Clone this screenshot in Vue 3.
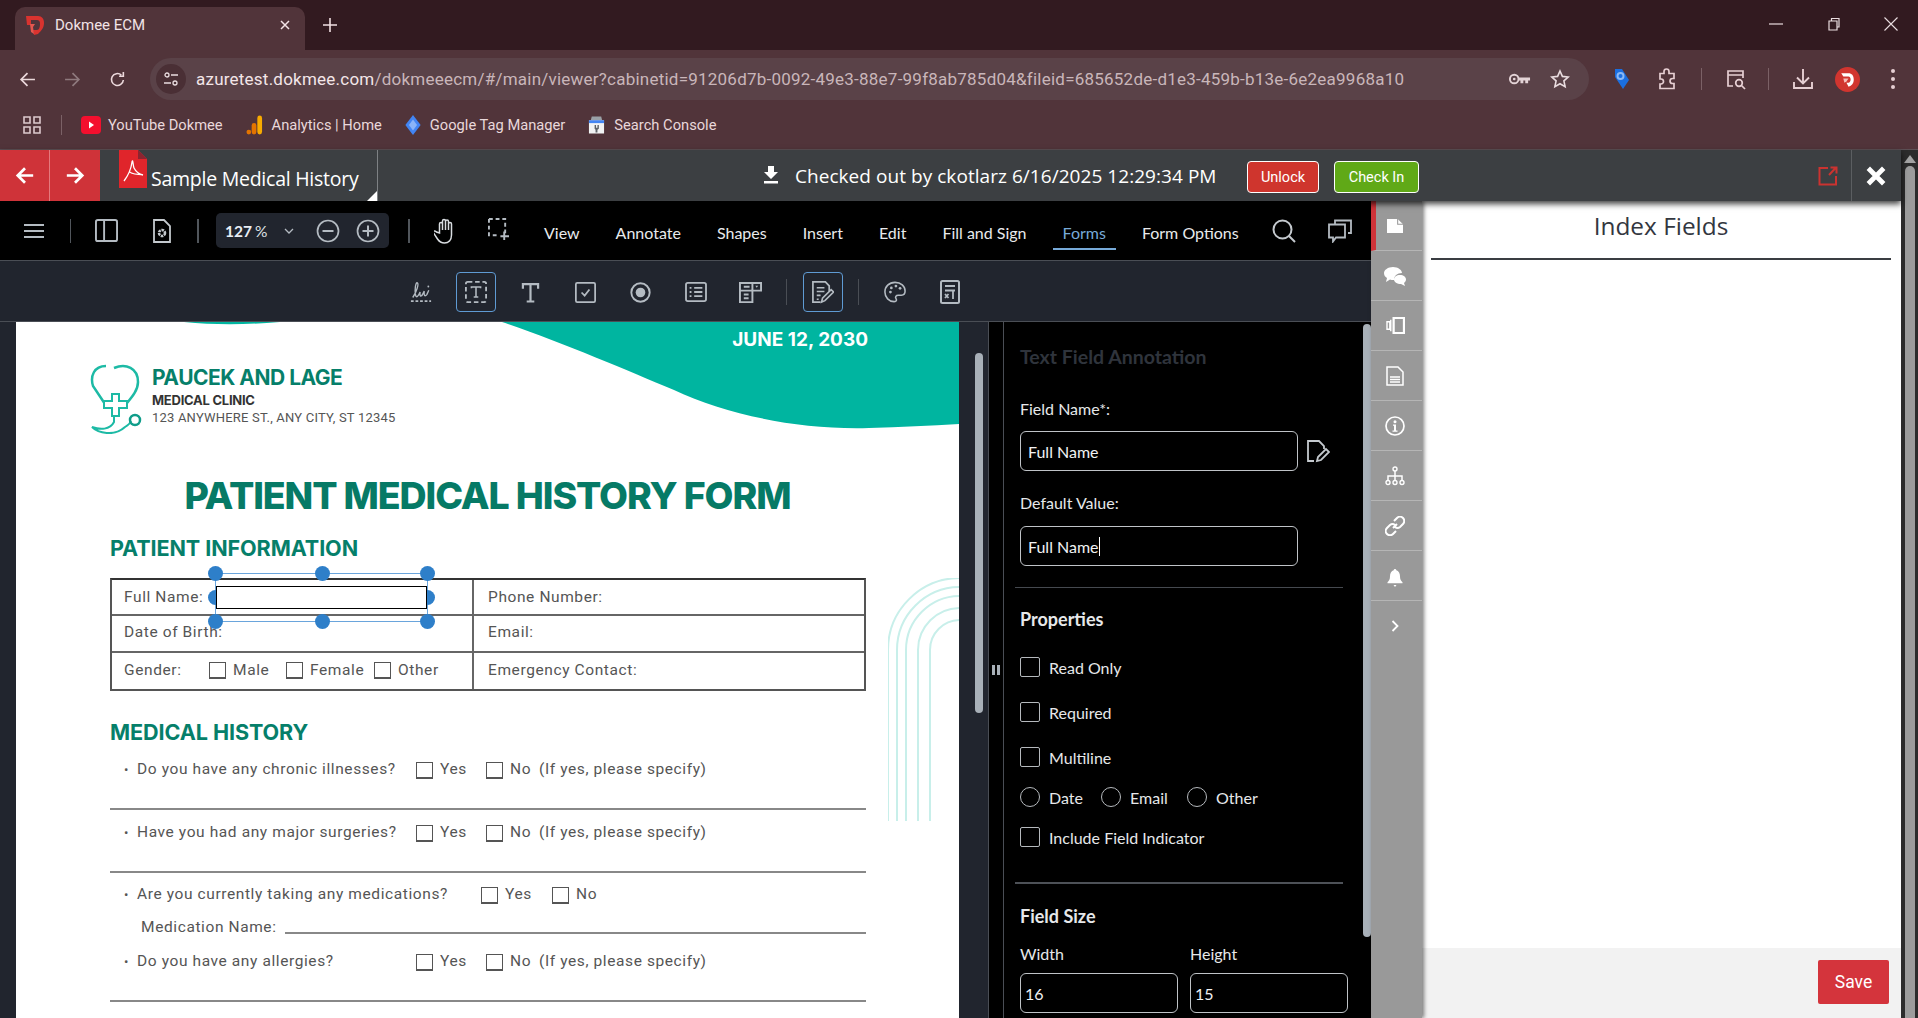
<template>
  <div class="screen">
    <!-- browser tab strip -->
    <div class="tabstrip">
      <div class="tab">
        <svg class="favicon" viewBox="0 0 20 20"><path d="M1 1h12c4 0 6 3 6 7 0 5-3 8-6 11l-4 1-1-5h4c2 0 3-3 3-6s-1-4-3-4H6v5H2z" fill="#d9332f"/><path d="M5 9h5l-2 3 1 7-3-2z" fill="#e4574f"/></svg>
        <span class="tab-title">Dokmee ECM</span>
        <svg class="tab-x" viewBox="0 0 12 12"><path d="M2 2l8 8M10 2l-8 8" stroke="#f3e3e6" stroke-width="1.5"/></svg>
      </div>
      <svg class="tab-plus" viewBox="0 0 14 14"><path d="M7 0v14M0 7h14" stroke="#f0dfe2" stroke-width="1.6"/></svg>
      <div class="winctl">
        <svg viewBox="0 0 14 14" class="w-min"><path d="M0 7h14" stroke="#eadde0" stroke-width="1.2"/></svg>
        <svg viewBox="0 0 14 14" class="w-max"><path d="M2 4h8v9H2zM4.500 4V1.500h7.500V10h-2" fill="none" stroke="#eadde0" stroke-width="1.2"/></svg>
        <svg viewBox="0 0 14 14" class="w-close"><path d="M.5.500l13 13M13.500.500l-13 13" stroke="#eadde0" stroke-width="1.1"/></svg>
      </div>
    </div>

    <!-- browser toolbar -->
    <div class="toolbar">
      <button class="nav-btn">
        <svg viewBox="0 0 16 16" width="17" height="17"><path d="M15 8H2M8 2L2 8l6 6" fill="none" stroke="#ecd9dc" stroke-width="1.6"/></svg>
      </button>
      <button class="nav-btn">
        <svg viewBox="0 0 16 16" width="17" height="17"><path d="M1 8h13M8 2l6 6-6 6" fill="none" stroke="#8f7a7e" stroke-width="1.6"/></svg>
      </button>
      <button class="nav-btn">
        <svg viewBox="0 0 16 16" width="17" height="17"><path d="M13.500 8.500A5.600 5.600 0 1 1 11.600 3.800M13.500 1v4h-4" fill="none" stroke="#ecd9dc" stroke-width="1.5"/></svg>
      </button>
      <div class="omnibox">
        <span class="site-info">
          <svg viewBox="0 0 16 16" width="16" height="16"><circle cx="4" cy="4" r="2" fill="none" stroke="#eadde0" stroke-width="1.3"/><path d="M8 4h7M1 12h7" stroke="#eadde0" stroke-width="1.3"/><circle cx="12" cy="12" r="2" fill="none" stroke="#eadde0" stroke-width="1.3"/></svg>
        </span>
        <span class="url"><span class="url-host">azuretest.dokmee.com</span>/dokmeeecm/#/main/viewer?cabinetid=91206d7b-0092-49e3-88e7-99f8ab785d04&amp;fileid=685652de-d1e3-459b-b13e-6e2ea9968a10</span>
        <svg class="omni-key" viewBox="0 0 24 14"><circle cx="6.500" cy="7" r="4.500" fill="none" stroke="#e3d3d6" stroke-width="2"/><circle cx="6.500" cy="7" r="1.400" fill="#e3d3d6"/><path d="M11 5.500h12v3h-2v3h-3v-3h-2v3h-3v-3h-2z" fill="#e3d3d6"/></svg>
        <svg class="omni-star" viewBox="0 0 20 20"><path d="M10 2l2.400 5.400 5.800.6-4.300 3.900 1.200 5.700L10 14.700l-5.100 2.900 1.200-5.700L1.800 8l5.800-.6z" fill="none" stroke="#eadde0" stroke-width="1.600"/></svg>
      </div>
      <span class="ext ext-tag">
        <svg viewBox="0 0 18 24" width="18" height="24"><path d="M2 2h7l7 11-6 9L2 10z" fill="#1b6fe0"/><circle cx="7.500" cy="9" r="3" fill="none" stroke="#8ab8f5" stroke-width="2"/></svg>
      </span>
      <span class="ext ext-puzzle">
        <svg viewBox="0 0 20 22" width="20" height="22"><path d="M3 5h4V3a2.500 2.500 0 0 1 5 0v2h5v5h-1.500a2 2 0 0 0 0 5H17v5H3v-4.500h1a2.500 2.500 0 0 0 0-5H3z" transform="translate(0 .5)" fill="none" stroke="#e7cfd3" stroke-width="1.700"/></svg>
      </span>
      <i class="tb-div first"></i>
      <span class="ext ext-search">
        <svg viewBox="0 0 22 22" width="22" height="22"><path d="M8 18H3V3h15v7M3 7h15" fill="none" stroke="#e7cfd3" stroke-width="1.700"/><circle cx="14" cy="15" r="3.300" fill="none" stroke="#e7cfd3" stroke-width="1.700"/><path d="M16.500 17.500L20 21" stroke="#e7cfd3" stroke-width="1.700"/></svg>
      </span>
      <i class="tb-div second"></i>
      <span class="ext ext-dl">
        <svg viewBox="0 0 22 24" width="22" height="24"><path d="M11 2v14M5 10.500l6 6 6-6M2 15v6h18v-6" fill="none" stroke="#e7cfd3" stroke-width="1.900"/></svg>
      </span>
      <span class="ext ext-profile">
        <svg viewBox="0 0 24 24" width="25" height="25"><circle cx="12" cy="12" r="12" fill="#d1352f"/><path d="M6 6h7c3 0 5 2 5 6s-2 6-5 7l-2-4h2c1 0 2-1 2-3s-1-3-2-3H8z" fill="#fff"/><path d="M8 11h5l-2 3-2 1z" fill="#f6bcb7"/></svg>
      </span>
      <span class="ext ext-kebab"><i></i><i></i><i></i></span>
    </div>

    <!-- bookmarks -->
    <div class="bookmarks">
      <svg class="apps" viewBox="0 0 18 18"><path d="M1 1h6v6H1zM11 1h6v6h-6zM1 11h6v6H1zM11 11h6v6h-6z" fill="none" stroke="#dcc9cd" stroke-width="1.600"/></svg>
      <i class="bm-div"></i>
      <span class="bm bm-yt">
        <svg viewBox="0 0 20 20" width="20" height="20"><rect y="1" width="20" height="18" rx="4" fill="#f40f2e"/><path d="M8 6.500l5 3.500-5 3.500z" fill="#fff"/></svg>
        YouTube Dokmee
      </span>
      <span class="bm bm-ga">
        <svg viewBox="0 0 18 22" width="17" height="22"><rect x="12" y="1" width="5" height="20" rx="2.500" fill="#f9ab00"/><rect x="6" y="9" width="5" height="12" rx="2.500" fill="#e37400"/><circle cx="3" cy="18.500" r="2.500" fill="#e37400"/></svg>
        Analytics | Home
      </span>
      <span class="bm bm-gtm">
        <svg viewBox="0 0 20 24" width="18" height="24"><path d="M10 1l8.500 11L10 23 1.500 12z" fill="#4285f4"/><path d="M10 6l4.500 6L10 18l-4.500-6z" fill="#8ab4f8"/></svg>
        Google Tag Manager
      </span>
      <span class="bm bm-sc">
        <svg viewBox="0 0 18 22" width="17" height="22"><path d="M4 2h10l1 4H3z" fill="#9aa0a6"/><rect x="1" y="6" width="16" height="14" fill="#f1f3f4"/><rect x="1" y="6" width="16" height="3" fill="#4285f4"/><path d="M7 11h1.500v3H10v-3h1.500v4l-1.500 1v3H8v-3l-1-1z" fill="#5f6368"/></svg>
        Search Console
      </span>
    </div>

    <div class="app">
      <div class="app-main">
        <!-- dokmee header -->
        <header class="app-header">
          <button class="red-nav divided">
            <svg viewBox="0 0 22 20" width="20" height="19"><path d="M20 10H4M11 2l-8 8 8 8" fill="none" stroke="#fff" stroke-width="3"/></svg>
          </button>
          <button class="red-nav">
            <svg viewBox="0 0 22 20" width="20" height="19"><path d="M2 10h16M11 2l8 8-8 8" fill="none" stroke="#fff" stroke-width="3"/></svg>
          </button>
          <div class="doc-title">
            <svg class="pdf-icon" viewBox="0 0 28 38">
              <path d="M0 0h19l9 9v29H0z" fill="#e0252b"/>
              <path d="M19 0l9 9h-9z" fill="#8c2430"/>
              <path d="M5 31c3-4 7-11 8-19 1-4 1 4 2 6 2 4 5 6 9 7-5-1-12 0-14-4" fill="none" stroke="#fff" stroke-width="1.300"/>
            </svg>
            <span class="doc-name">Sample Medical History</span>
            <i class="corner"></i>
          </div>
          <svg class="dl-icon" viewBox="0 0 14 18"><path d="M4 0h6v6h4l-7 7-7-7h4zM0 15h14v2.500H0z" fill="#fff"/></svg>
          <span class="checked">Checked out by ckotlarz 6/16/2025 12:29:34 PM</span>
          <button class="hbtn unlock">Unlock</button>
          <button class="hbtn checkin">Check In</button>
          <svg class="pop-out" viewBox="0 0 20 20"><path d="M18 10v8.500H1.500V2H10M11 9l7-7.500M12.500 1.500h6v6" fill="none" stroke="#cb3330" stroke-width="2"/></svg>
          <div class="close-box">
            <svg viewBox="0 0 20 20" width="22" height="22"><path d="M3 3l14 14M17 3L3 17" stroke="#fff" stroke-width="4.400"/></svg>
          </div>
        </header>

        <div class="app-body">
          <section class="viewer">
            <div class="vbar">
              <svg class="vi hamburger" viewBox="0 0 20 16"><path d="M0 2h20M0 8h20M0 14h20" stroke="#b4bbc2" stroke-width="2"/></svg>
              <i class="v-div d1"></i>
              <svg class="vi panel-ic" viewBox="0 0 24 24"><rect x="1" y="1" width="22" height="22" rx="2" fill="none" stroke="#b4bbc2" stroke-width="2"/><path d="M9.500 1v22" stroke="#b4bbc2" stroke-width="2"/></svg>
              <svg class="vi file-ic" viewBox="0 0 18 24"><path d="M1 1h10l6 6v16H1z" fill="none" stroke="#c4c9ce" stroke-width="1.800"/><circle cx="9" cy="14" r="3" fill="none" stroke="#c4c9ce" stroke-width="2.600" stroke-dasharray="2.500 .8"/></svg>
              <i class="v-div d2"></i>
              <div class="zoombox">
                <span class="zoom-val">127</span><span class="zoom-pct">%</span>
                <svg class="zoom-chev" viewBox="0 0 10 6"><path d="M1 1l4 4 4-4" fill="none" stroke="#b4bbc2" stroke-width="1.300"/></svg>
                <svg class="zoom-c minus" viewBox="0 0 24 24"><circle cx="12" cy="12" r="10.500" fill="none" stroke="#b4bbc2" stroke-width="1.700"/><path d="M6.500 12h11" stroke="#b4bbc2" stroke-width="2"/></svg>
                <svg class="zoom-c plus" viewBox="0 0 24 24"><circle cx="12" cy="12" r="10.500" fill="none" stroke="#b4bbc2" stroke-width="1.700"/><path d="M6.500 12h11M12 6.500v11" stroke="#b4bbc2" stroke-width="2"/></svg>
              </div>
              <i class="v-div d3"></i>
              <svg class="vi hand" viewBox="0 0 22 26"><path d="M5 15V6a1.400 1.400 0 0 1 3 0v6V3a1.400 1.400 0 0 1 3 0v9V3.500a1.400 1.400 0 0 1 3 0V12 6a1.400 1.400 0 0 1 3 0v11c0 5-3 8-7 8-3 0-5-1-7-4l-4-6c-1-2 1-3 3-1z" fill="none" stroke="#d9dde1" stroke-width="1.500"/></svg>
              <svg class="vi sel" viewBox="0 0 22 24"><path d="M1 1h17v15M1 1v17h11" fill="none" stroke="#b4bbc2" stroke-width="2" stroke-dasharray="4 3"/><path d="M17 14v9M13 19h9" stroke="#b4bbc2" stroke-width="2"/></svg>
              <nav class="menu">
                <span v-for="m in menu" :key="m" :class="['menu-item', { active: m === 'Forms' }]">{{ m }}</span>
              </nav>
              <svg class="vi search" viewBox="0 0 24 24"><circle cx="10.500" cy="10.500" r="9" fill="none" stroke="#c4c9ce" stroke-width="2"/><path d="M17 17l6 6" stroke="#c4c9ce" stroke-width="2"/></svg>
              <svg class="vi comments" viewBox="0 0 24 24"><path d="M7 5V1.500h16V14h-3M1 5.500h16v13H8l-3 4v-4H1z" fill="none" stroke="#b4bbc2" stroke-width="1.800"/></svg>
            </div>

            <div class="fbar">
              <span class="f-item"><svg viewBox="0 0 24 24" width="22" height="22"><path d="M3 18C7 12 10 3 8 2 6 1 5 10 6 15c.8 4 3 2 5-3-.5 4 .5 6 2.500 3l2-4c-.5 4 .5 7 3 3.500l2-4.500" fill="none" stroke="#b4bbc2" stroke-width="1.500"/><circle cx="20" cy="6" r="1" fill="#b4bbc2"/><path d="M1 22h22" stroke="#b4bbc2" stroke-width="2" stroke-dasharray="3 2"/></svg></span>
              <span class="f-item boxed"><svg viewBox="0 0 24 24" width="22" height="22"><rect x="1" y="1" width="22" height="22" rx="2" fill="none" stroke="#b4bbc2" stroke-width="2" stroke-dasharray="5 3"/><path d="M7 8V6.500h10V8M12 6.500v11M9.500 17.500h5" fill="none" stroke="#b4bbc2" stroke-width="1.700"/></svg></span>
              <span class="f-item"><svg viewBox="0 0 20 22" width="19" height="21"><path d="M2 7V2.200h16V7M10 2.200v18M6 20.500h8" fill="none" stroke="#b4bbc2" stroke-width="2.300"/></svg></span>
              <span class="f-item"><svg viewBox="0 0 24 24" width="21" height="21"><rect x="1" y="1" width="22" height="22" rx="1.500" fill="none" stroke="#b4bbc2" stroke-width="2"/><path d="M7.500 12l3.500 3.500 5.500-7" fill="none" stroke="#b4bbc2" stroke-width="2"/></svg></span>
              <span class="f-item"><svg viewBox="0 0 24 24" width="21" height="21"><circle cx="12" cy="12" r="10.500" fill="none" stroke="#b4bbc2" stroke-width="2.200"/><circle cx="12" cy="12" r="5.500" fill="#b4bbc2"/></svg></span>
              <span class="f-item"><svg viewBox="0 0 24 22" width="22" height="20"><rect x="1" y="1" width="22" height="20" rx="2" fill="none" stroke="#b4bbc2" stroke-width="2"/><path d="M5 6.500h2M5 11h2M5 15.500h2M10 6.500h9M10 11h9M10 15.500h9" stroke="#b4bbc2" stroke-width="2"/></svg></span>
              <span class="f-item"><svg viewBox="0 0 24 24" width="23" height="23"><path d="M1 2h22v8H14v12H1z" fill="none" stroke="#b4bbc2" stroke-width="2"/><path d="M14 2v8M1 10h13M5 6h6M5 14h5M5 18h5" stroke="#b4bbc2" stroke-width="2"/><path d="M17 5l1.500 2L20 5z" fill="#b4bbc2"/></svg></span>
              <i class="f-div"></i>
              <span class="f-item boxed"><svg viewBox="0 0 24 24" width="23" height="23"><path d="M10 22H2V1h13l4 4v6" fill="none" stroke="#b4bbc2" stroke-width="1.800"/><path d="M6 7h8M6 11h8M6 15h4M6 19h2" stroke="#b4bbc2" stroke-width="1.700"/><path d="M11 22l1-4 9-9 2.500 2.500-9 9z" fill="none" stroke="#b4bbc2" stroke-width="1.700"/></svg></span>
              <i class="f-div"></i>
              <span class="f-item"><svg viewBox="0 0 24 24" width="22" height="22"><path d="M12 1.500C5.500 1.500 1 6 1 12s4.500 10.500 10 10.500c3 0 3-2 2-3.500s0-3.500 2.500-3.500H19c3 0 4-2 4-4.500C23 5.500 18.500 1.500 12 1.500z" fill="none" stroke="#b4bbc2" stroke-width="1.700"/><circle cx="7" cy="12" r="1.500" fill="#b4bbc2"/><circle cx="8" cy="7.500" r="1.500" fill="#b4bbc2"/><circle cx="13" cy="5.500" r="1.500" fill="#b4bbc2"/><circle cx="17.500" cy="8" r="1.500" fill="#b4bbc2"/></svg></span>
              <span class="f-item"><svg viewBox="0 0 20 24" width="20" height="24"><rect x="1" y="1" width="18" height="22" rx="1.500" fill="none" stroke="#b4bbc2" stroke-width="2"/><path d="M5 6h10M5 10.500h10M13 10v9M5 14l3.500 4M8.500 14L5 18" stroke="#b4bbc2" stroke-width="1.800"/></svg></span>
            </div>

            <div class="doc-area">
              <div class="page">
                <svg class="wave" viewBox="0 0 944 110"><path d="M486 0C545 20 610 48 658 68 710 92 780 108 853 106 885 105 915 104 944 102V0z" fill="#00b5a0"/><path d="M168 0c30 3 60 3 96 0z" fill="#00b5a0"/></svg>
                <svg class="arches" viewBox="0 0 72 243"><path v-for="r in [72, 63, 54, 42, 30]" :key="r" :d="`M${72 - r} 243V72A${r} ${r} 0 0 1 72 ${72 - r}`" fill="none" stroke="#c8efea" stroke-width="2"/></svg>

                <div class="date">JUNE 12, 2030</div>
                <div class="clinic">
                  <svg class="logo" viewBox="0 0 52 70">
                    <path d="M16 2C4 2 0 12 3 22l12 18M24 4c12-5 24 0 24 14 0 10-9 18-15 26" fill="none" stroke="#1dbaa5" stroke-width="2.500"/>
                    <path d="M14 37h8v-7h7v7h8v7h-8v8h-7v-8h-8z" fill="#fff" stroke="#1dbaa5" stroke-width="2"/>
                    <path d="M24 52v6c-4 8-14 8-22 5 6 6 22 10 33 0 5-3 6-6 6-6" fill="none" stroke="#1dbaa5" stroke-width="2"/>
                    <circle cx="45" cy="56" r="5" fill="none" stroke="#0f9d8a" stroke-width="2.500"/>
                  </svg>
                  <div class="clinic-text">
                    <div class="clinic-name">PAUCEK AND LAGE</div>
                    <div class="clinic-sub">MEDICAL CLINIC</div>
                    <div class="clinic-addr">123 ANYWHERE ST., ANY CITY, ST 12345</div>
                  </div>
                </div>
                <h1 class="form-title">PATIENT MEDICAL HISTORY FORM</h1>

                <h2 class="form-h first">PATIENT INFORMATION</h2>
                <div class="info-table">
                  <div class="cell">Full Name:</div>
                  <div class="cell right">Phone Number:</div>
                  <div class="cell">Date of Birth:</div>
                  <div class="cell right">Email:</div>
                  <div class="cell gender">
                    <span class="g-label">Gender:</span>
                    <i class="box"></i><span class="g-male">Male</span>
                    <i class="box"></i><span class="g-female">Female</span>
                    <i class="box"></i><span>Other</span>
                  </div>
                  <div class="cell right">Emergency Contact:</div>
                </div>

                <h2 class="form-h second">MEDICAL HISTORY</h2>
                <div v-for="q in questions" :key="q.text" :class="['q', { short: q.short }]">
                  <div class="q-row">
                    <span class="bullet">•</span>
                    <span :class="['q-text', { wide: q.wide }]">{{ q.text }}</span>
                    <i class="box"></i><span :class="['yes', { wide: q.wide }]">Yes</span>
                    <i class="box"></i><span class="no">No</span>
                    <span v-if="!q.short">(If yes, please specify)</span>
                  </div>
                  <div v-if="q.short" class="med-row">
                    <span>Medication Name:</span><i class="med-line"></i>
                  </div>
                </div>

                <!-- selected text field annotation -->
                <div class="selection">
                  <i v-for="h in handles" :key="h" :class="['handle', h]"></i>
                  <div class="sel-field"></div>
                </div>
              </div>
            </div>
          </section>

          <div class="gutter">
            <div class="gutter-track"><i class="gutter-thumb"></i></div>
            <div class="grip"><i></i><i></i></div>
          </div>

          <aside class="props">
            <div class="props-body">
              <div class="props-title">Text Field Annotation</div>
              <div class="lbl field-label">Field Name*:</div>
              <div class="field-row">
                <div class="input">Full Name</div>
                <svg class="rename" viewBox="0 0 24 24"><path d="M8 22H2V2h11l5 5v3" fill="none" stroke="#c4c9ce" stroke-width="1.800"/><path d="M11 22l1-4 8-8 3 3-8 8z" fill="none" stroke="#c4c9ce" stroke-width="1.800"/></svg>
              </div>
              <div class="lbl default-label">Default Value:</div>
              <div class="input focus">Full Name<i class="caret"></i></div>
              <hr class="rule thin" />
              <div class="sub props-h">Properties</div>
              <label v-for="c in checks" :key="c.label" :class="['check', c.cls]"><i class="cb"></i>{{ c.label }}</label>
              <div class="radios">
                <label v-for="r in radios" :key="r" class="radio"><i class="rd"></i>{{ r }}</label>
              </div>
              <label class="check inc"><i class="cb"></i>Include Field Indicator</label>
              <hr class="rule thick" />
              <div class="sub size-h">Field Size</div>
              <div class="size-grid">
                <div>
                  <div class="lbl">Width</div>
                  <div class="input small">16</div>
                </div>
                <div>
                  <div class="lbl">Height</div>
                  <div class="input small">15</div>
                </div>
              </div>
            </div>
            <div class="props-track"><i class="props-thumb"></i></div>
          </aside>

          <!-- side icon rail -->
          <div class="rail">
            <div class="rail-item current"><svg viewBox="0 0 20 18" width="18" height="16"><path d="M1 1h12l6 6v10H1z" fill="#fff"/><path d="M13 1v6h6" fill="none" stroke="#999" stroke-width="1.200"/></svg></div>
            <div class="rail-item"><svg viewBox="0 0 24 20" width="24" height="20"><path d="M10 1c5 0 9 3 9 6-5 0-8 3-8 7-2 0-3 0-4-.5L3 16l1-4C2 11 1 9 1 7c0-3 4-6 9-6z" fill="#fff"/><path d="M17 9c3.500 0 6 2 6 4.500 0 1.500-1 2.500-2 3.500l1 3-4-2c-4 0-7-2-7-4.500S13.500 9 17 9z" fill="#fff"/></svg></div>
            <div class="rail-item"><svg viewBox="0 0 20 18" width="19" height="17"><path d="M8 1h11v16H8z" fill="none" stroke="#fff" stroke-width="2.400"/><path d="M1 5h3v8H1zM5 3v12" fill="none" stroke="#fff" stroke-width="1.500"/></svg></div>
            <div class="rail-item"><svg viewBox="0 0 18 20" width="18" height="20"><path d="M1 1h11l5 5v13H1z" fill="none" stroke="#fff" stroke-width="1.500"/><path d="M4 11h10M4 13.500h10M4 16h10" stroke="#fff" stroke-width="1.400"/></svg></div>
            <div class="rail-item"><svg viewBox="0 0 20 20" width="20" height="20"><circle cx="10" cy="10" r="9" fill="none" stroke="#fff" stroke-width="1.700"/><circle cx="10" cy="5.800" r="1.500" fill="#fff"/><path d="M8 8.500h3v6h1.500v1.200h-5v-1.200H9v-4.800H8z" fill="#fff"/></svg></div>
            <div class="rail-item"><svg viewBox="0 0 20 20" width="20" height="20"><circle cx="10" cy="3" r="2" fill="none" stroke="#fff" stroke-width="1.400"/><circle cx="3" cy="16.500" r="2" fill="none" stroke="#fff" stroke-width="1.400"/><circle cx="10" cy="16.500" r="2" fill="none" stroke="#fff" stroke-width="1.400"/><circle cx="17" cy="16.500" r="2" fill="none" stroke="#fff" stroke-width="1.400"/><path d="M10 5v9.500M3 14.500V10h14v4.500" fill="none" stroke="#fff" stroke-width="1.500"/></svg></div>
            <div class="rail-item"><svg viewBox="0 0 20 20" width="20" height="20"><path d="M8 12l4-4M9 5l3-3a4 4 0 0 1 6 6l-3 3a4 4 0 0 1-5 0M11 15l-3 3a4 4 0 0 1-6-6l3-3a4 4 0 0 1 5 0" fill="none" stroke="#fff" stroke-width="2"/></svg></div>
            <div class="rail-item"><svg class="bell" viewBox="0 0 16 18" width="16" height="18"><path d="M8 0c.8 0 1.300.6 1.300 1.300 2.500.7 3.700 3 3.700 6 0 3 .8 4.500 2.500 6v1H.500v-1C2.200 11.800 3 10.300 3 7.300c0-3 1.200-5.300 3.700-6C6.700.6 7.200 0 8 0zM6.500 16h3L8 18z" fill="#fff"/></svg></div>
            <div class="rail-item"><svg viewBox="0 0 8 12" width="8" height="12"><path d="M1.500 1l5 5-5 5" fill="none" stroke="#fff" stroke-width="1.800"/></svg></div>
          </div>

          <section class="index-panel">
            <div class="index-content">
              <h3 class="index-title">Index Fields</h3>
            </div>
            <div class="index-footer"><button class="save">Save</button></div>
          </section>
        </div>
      </div>

      <div class="page-scroll">
        <svg class="up" viewBox="0 0 12 8"><path d="M6 0l6 8H0z" fill="#a3a3a3"/></svg>
        <i class="page-thumb"></i>
      </div>
    </div>
  </div>
</template>

<script setup>
const menu = ['View', 'Annotate', 'Shapes', 'Insert', 'Edit', 'Fill and Sign', 'Forms', 'Form Options']

const questions = [
  { text: 'Do you have any chronic illnesses?' },
  { text: 'Have you had any major surgeries?' },
  { text: 'Are you currently taking any medications?', wide: true, short: true },
  { text: 'Do you have any allergies?' }
]

const handles = ['tl', 'tm', 'tr', 'ml', 'mr', 'bl', 'bm', 'br']

const checks = [
  { label: 'Read Only', cls: 'c1' },
  { label: 'Required', cls: 'c2' },
  { label: 'Multiline', cls: 'c2' }
]

const radios = ['Date', 'Email', 'Other']
</script>

<style>
html, body {
  margin: 0;
  background: #000;
}
</style>

<style scoped>
.screen {
  width: 1918px;
  height: 1018px;
  display: flex;
  flex-direction: column;
  overflow: hidden;
  font-family: "Lato", "Noto Sans", sans-serif;
}

button {
  border: 0;
  padding: 0;
  background: none;
  font: inherit;
}

/* browser chrome */
.tabstrip {
  height: 50px;
  flex-shrink: 0;
  background: #321a20;
  display: flex;
  align-items: flex-end;
  padding-left: 15px;
}

.tab {
  width: 290px;
  height: 43px;
  background: #51343a;
  border-radius: 10px 10px 0 0;
  display: flex;
  align-items: center;
  padding: 0 0 7px 10px;
  box-sizing: border-box;
}

.favicon {
  width: 20px;
  height: 20px;
  flex-shrink: 0;
}

.tab-title {
  margin-left: 10px;
  font: 15px "Roboto", sans-serif;
  color: #f2e3e6;
}

.tab-x {
  width: 12px;
  height: 12px;
  margin-left: auto;
  margin-right: 14px;
}

.tab-plus {
  width: 14px;
  height: 14px;
  margin: 0 0 18px 18px;
}

.winctl {
  margin-left: auto;
  align-self: flex-start;
  display: flex;
  align-items: center;
  height: 47px;
}

.winctl svg {
  width: 14px;
  height: 14px;
}

.w-min { margin-right: 44px; }
.w-max { margin-right: 43px; }
.w-close { margin-right: 20px; }

.toolbar {
  height: 50px;
  flex-shrink: 0;
  background: #51343a;
  display: flex;
  align-items: flex-start;
  padding-top: 8px;
  box-sizing: border-box;
  padding-left: 5px;
}

.nav-btn {
  width: 45px;
  height: 42px;
  display: flex;
  align-items: center;
  justify-content: center;
}

.omnibox {
  width: 1439px;
  height: 42px;
  margin-left: 10px;
  flex-shrink: 0;
  border-radius: 21px;
  background: #5a4248;
  display: flex;
  align-items: center;
}

.site-info {
  width: 30px;
  height: 30px;
  border-radius: 50%;
  background: #4a2f35;
  margin-left: 6px;
  display: flex;
  align-items: center;
  justify-content: center;
}

.url {
  margin-left: 10px;
  font: 17px "Roboto", sans-serif;
  letter-spacing: .23px;
  color: #c9b6ba;
  white-space: nowrap;
  width: 1294px;
}

.url-host {
  color: #f3e6e8;
}

.omni-key {
  width: 23px;
  height: 14px;
  margin-left: 18px;
}

.omni-star {
  width: 20px;
  height: 20px;
  margin-left: 19px;
}

.ext {
  height: 42px;
  display: flex;
  align-items: center;
  justify-content: center;
  flex-shrink: 0;
}

.ext-tag { width: 44px; margin-left: 11px; }
.ext-puzzle { width: 46px; }
.ext-search { width: 42px; margin-left: 13px; }
.ext-dl { width: 44px; margin-left: 12px; }
.ext-profile { width: 44px; }
.ext-kebab {
  width: 48px;
  flex-direction: column;
  gap: 4px;
}

.ext-kebab i {
  width: 4px;
  height: 4px;
  border-radius: 50%;
  background: #e7cfd3;
}

.tb-div {
  width: 1px;
  height: 22px;
  background: #7b6166;
  margin: 10px 0 0 11px;
  flex-shrink: 0;
}

.bookmarks {
  height: 50px;
  flex-shrink: 0;
  background: #51343a;
  display: flex;
  align-items: center;
  padding: 0 0 0 23px;
  font: 14.700px "Roboto", sans-serif;
  color: #e9d8db;
  box-sizing: border-box;
  border-bottom: 1px solid #5c5055;
}

.apps {
  width: 18px;
  height: 18px;
}

.bm-div {
  width: 1px;
  height: 20px;
  background: #7b6166;
  margin-left: 20px;
}

.bm {
  display: flex;
  align-items: center;
  gap: 7px;
  white-space: nowrap;
}

.bm-yt { margin-left: 19px; }
.bm-ga { margin-left: 23px; gap: 9px; }
.bm-gtm { margin-left: 22px; gap: 8px; }
.bm-sc { margin-left: 23px; gap: 9px; }

/* app */
.app {
  flex: 1;
  min-height: 0;
  display: flex;
}

.app-main {
  width: 1901px;
  display: flex;
  flex-direction: column;
}

.app-header {
  height: 51px;
  flex-shrink: 0;
  background: #3c3f42;
  display: flex;
  align-items: center;
  position: relative;
  z-index: 3;
  box-shadow: 0 3px 6px rgba(0, 0, 0, .75);
  color: #fff;
}

.red-nav {
  width: 50px;
  height: 51px;
  background: #cf3339;
  display: flex;
  align-items: center;
  justify-content: center;
  flex-shrink: 0;
}

.red-nav.divided {
  border-right: 1px solid #e4797d;
}

.doc-title {
  height: 51px;
  width: 278px;
  flex-shrink: 0;
  box-sizing: border-box;
  border-right: 1px solid #7e8184;
  display: flex;
  padding-left: 19px;
  position: relative;
}

.pdf-icon {
  width: 28px;
  height: 38px;
  flex-shrink: 0;
}

.doc-name {
  font: 19.5px "Open Sans", sans-serif;
  margin: 15px 0 0 4px;
  letter-spacing: -.25px;
  white-space: nowrap;
}

.corner {
  position: absolute;
  right: 0;
  bottom: 0;
  border-style: solid;
  border-width: 0 0 10px 10px;
  border-color: transparent transparent #fff transparent;
}

.dl-icon {
  width: 14px;
  height: 18px;
  margin-left: 386px;
  margin-bottom: 2px;
}

.checked {
  margin-left: 17px;
  font: 19px "Open Sans", sans-serif;
  letter-spacing: .05px;
  white-space: nowrap;
  width: 422px;
}

.hbtn {
  height: 32px;
  border: 1px solid #fff;
  border-radius: 4px;
  color: #fff;
  font: 14.500px "Roboto", sans-serif;
  flex-shrink: 0;
  margin-top: 3px;
}

.unlock {
  width: 72px;
  background: #cf352d;
  margin-left: 30px;
}

.checkin {
  width: 85px;
  background: #60a917;
  margin-left: 15px;
}

.pop-out {
  width: 20px;
  height: 20px;
  margin-left: auto;
  margin-right: 13px;
}

.close-box {
  width: 50px;
  height: 51px;
  border-left: 1px solid #5b5e61;
  box-sizing: border-box;
  display: flex;
  align-items: center;
  justify-content: center;
  padding-right: 2px;
}

.app-body {
  flex: 1;
  min-height: 0;
  display: flex;
  position: relative;
}

.viewer {
  width: 988px;
  display: flex;
  flex-direction: column;
  background: #21252e;
  flex-shrink: 0;
  position: relative;
}

/* the two viewer bars run under the properties panel as well */
.vbar,
.fbar {
  width: 1371px;
  box-sizing: border-box;
  display: flex;
  align-items: center;
  flex-shrink: 0;
  position: relative;
  z-index: 2;
}

.vbar {
  height: 60px;
  background: #000;
  border-bottom: 1px solid #4a4e55;
}

.fbar {
  height: 61px;
  background: #21252e;
  padding: 2px 0 0 393px;
  border-bottom: 1px solid #4a4e55;
}

.vi {
  flex-shrink: 0;
}

.hamburger { width: 20px; height: 16px; margin-left: 24px; }
.v-div {
  width: 1px;
  height: 24px;
  background: #51565c;
  flex-shrink: 0;
}
.d1 { margin-left: 26px; }
.panel-ic { width: 23px; height: 23px; margin-left: 24px; }
.file-ic { width: 18px; height: 24px; margin-left: 35px; }
.d2 { margin-left: 26px; width: 2px; }
.zoombox {
  width: 173px;
  height: 35px;
  margin-left: 17px;
  background: #21252e;
  border-radius: 5px;
  display: flex;
  align-items: center;
  padding-left: 9px;
  box-sizing: border-box;
  flex-shrink: 0;
  color: #dfe3e6;
  font-size: 15.500px;
}
.zoom-val { font-weight: 700; color: #e8eef5; }
.zoom-pct { margin-left: 3px; }
.zoom-chev { width: 10px; height: 6px; margin-left: 17px; }
.zoom-c { width: 24px; height: 24px; }
.zoom-c.minus { margin-left: 22px; }
.zoom-c.plus { margin-left: 16px; }
.d3 { margin-left: 19px; width: 2px; }
.hand { width: 23px; height: 26px; margin-left: 24px; }
.sel { width: 21px; height: 23px; margin-left: 31px; margin-top: -2px; }

.menu {
  display: flex;
  gap: 36px;
  margin-left: 35px;
  height: 100%;
  color: #e8eaec;
  font-size: 16px;
}

.menu-item {
  display: flex;
  align-items: center;
  position: relative;
  padding-top: 4px;
  white-space: nowrap;
}

.menu-item.active {
  color: #77aad9;
}

.menu-item.active::after {
  content: "";
  position: absolute;
  left: -10px;
  right: -10px;
  bottom: 10px;
  height: 2px;
  background: #77aad9;
}

.search { width: 24px; height: 24px; position: absolute; left: 1272px; }
.comments { width: 24px; height: 24px; position: absolute; left: 1328px; }

.f-item {
  width: 55px;
  height: 40px;
  display: flex;
  align-items: center;
  justify-content: center;
  box-sizing: border-box;
  flex-shrink: 0;
}

.f-item.boxed {
  width: 40px;
  margin: 0 7.500px;
  border: 1px solid #5f9bd4;
  border-radius: 4px;
}

.f-div {
  width: 1px;
  height: 26px;
  margin: 0 8px;
  background: #4a4e55;
  flex-shrink: 0;
}

.doc-area {
  flex: 1;
  min-height: 0;
  overflow: hidden;
  padding-left: 16px;
  width: 943px;
}

/* pdf page */
.page {
  width: 943px;
  height: 900px;
  background: #fff;
  position: relative;
  overflow: hidden;
  display: flow-root;
  font-family: "Roboto", sans-serif;
  font-size: 15.500px;
  color: #555;
  letter-spacing: .6px;
}

.wave {
  position: absolute;
  left: 0;
  top: 0;
  width: 944px;
  height: 110px;
}

.arches {
  position: absolute;
  left: 872px;
  top: 256px;
  width: 72px;
  height: 243px;
}

.date {
  position: relative;
  margin-top: 6px;
  padding-right: 91px;
  text-align: right;
  color: #fff;
  font: 700 19px/24px "Inter", sans-serif;
  letter-spacing: 0;
}

.clinic {
  position: relative;
  display: flex;
  margin: 12px 0 0 74px;
  height: 70px;
}

.logo {
  width: 52px;
  height: 70px;
  flex-shrink: 0;
}

.clinic-text {
  margin-left: 10px;
  letter-spacing: 0;
}

.clinic-name {
  font: 700 21px/26px "Inter", sans-serif;
  color: #067f6a;
  letter-spacing: -.5px;
  margin-top: 1px;
}

.clinic-sub {
  font: 700 13px/18px "Inter", sans-serif;
  color: #333;
  letter-spacing: -.25px;
}

.clinic-addr {
  font: 13px/18px "Roboto", sans-serif;
  letter-spacing: .2px;
  color: #555;
}

.form-title {
  margin: 40px 0 0;
  text-align: center;
  font: 800 37.500px/44px "Inter", sans-serif;
  letter-spacing: -1.100px;
  color: #067a66;
}

.form-h {
  margin: 0 0 2px 94px;
  font: 700 21.600px/26px "Inter", sans-serif;
  letter-spacing: -.1px;
  color: #067f6a;
}

.form-h.first { margin-top: 17px; margin-bottom: 0; }
.form-h.second { margin-top: 28px; }

.info-table {
  margin: 17px 0 0 94px;
  width: 756px;
  height: 113px;
  display: grid;
  grid-template-columns: 360px 392px;
  grid-template-rows: 36px 37px 36px;
  box-sizing: border-box;
  border: 2px solid #555;
  border-top-color: #333;
}

.cell {
  padding: 0 0 0 12px;
  box-sizing: border-box;
  display: flex;
  align-items: center;
  border-bottom: 2px solid #666;
  white-space: nowrap;
}

.cell:nth-child(3),
.cell:nth-child(4) {
  padding-bottom: 4px;
}

.cell:nth-last-child(-n + 2) {
  border-bottom: 0;
  padding-bottom: 3px;
}

.cell.right {
  border-left: 2px solid #666;
  padding-left: 14px;
}

.box {
  width: 17px;
  height: 17px;
  border: 1.500px solid #555;
  border-bottom-width: 2px;
  box-sizing: border-box;
  flex-shrink: 0;
  margin-top: 2px;
}

.g-label { width: 85px; }
.gender .box { margin-right: 7px; }
.g-male { width: 53px; }
.g-female { width: 64px; }

.q {
  margin-left: 94px;
  width: 756px;
  height: 63px;
  box-sizing: border-box;
  border-bottom: 2px solid #888;
  padding: 10px 0 0 14px;
}

.q.short {
  height: 66px;
  border-bottom: 0;
  padding-top: 9px;
}

.q-row {
  display: flex;
  align-items: center;
  height: 24px;
  white-space: nowrap;
}

.bullet {
  width: 13px;
  font-size: 13px;
}

.q-text {
  width: 279px;
  flex-shrink: 0;
}

.q-text.wide { width: 344px; }

.q-row .box { margin-right: 7px; }

.yes { width: 46px; }
.yes.wide { width: 47px; }
.no { width: 29px; }

.med-row {
  display: flex;
  align-items: center;
  margin: 9px 0 0 17px;
  height: 24px;
  white-space: nowrap;
}

.med-line {
  flex: 1;
  height: 2px;
  background: #888;
  margin: 12px 0 0 8px;
}

/* selection handles */
.selection {
  position: absolute;
  left: 199px;
  top: 251px;
  width: 213px;
  height: 49px;
  box-sizing: border-box;
  border: 1.500px solid #6aa5dc;
  display: flex;
  align-items: center;
}

.sel-field {
  width: 100%;
  height: 23px;
  background: #fff;
  border: 1.500px solid #000;
  box-sizing: border-box;
  position: relative;
}

.handle {
  position: absolute;
  width: 15px;
  height: 15px;
  border-radius: 50%;
  background: #2e7fc9;
}

.tl, .tm, .tr { top: -8px; }
.ml, .mr { top: 16px; }
.bl, .bm, .br { bottom: -8px; }
.tl, .ml, .bl { left: -8px; }
.tm, .bm { left: 99px; }
.tr, .mr, .br { right: -8px; }

/* gutter between page and panel */
.gutter {
  width: 16px;
  background: #000;
  margin-top: 121px;
  display: flex;
  align-items: center;
  justify-content: center;
  flex-shrink: 0;
  position: relative;
  box-sizing: border-box;
  border-left: 1px solid #4a4e55;
  border-right: 1px solid #4a4e55;
}

.gutter-track {
  position: absolute;
  right: 20px;
  top: 31px;
}

.gutter-thumb {
  display: block;
  width: 8px;
  height: 360px;
  border-radius: 4px;
  background: #a8b0b8;
}

.grip {
  display: flex;
  gap: 2px;
  margin-top: 0;
}

.grip i {
  width: 3px;
  height: 10px;
  background: #a8b0b8;
}

/* properties panel */
.props {
  width: 367px;
  flex-shrink: 0;
  margin-top: 121px;
  background: #000;
  display: flex;
  overflow: hidden;
  color: #e6e8ea;
  font-size: 16px;
}

.props-body {
  width: 359px;
  box-sizing: border-box;
  padding: 23px 0 0 16px;
}

.props-title {
  font-size: 19.500px;
  line-height: 24px;
  font-weight: 700;
  color: #2f343c;
}

.lbl {
  line-height: 20px;
}

.field-label { margin-top: 30px; }
.default-label { margin-top: 22px; }

.field-row {
  display: flex;
  align-items: center;
  margin-top: 12px;
}

.input {
  width: 278px;
  height: 40px;
  box-sizing: border-box;
  border: 1px solid #bfc3c7;
  border-radius: 6px;
  padding: 1px 0 0 7px;
  display: flex;
  align-items: center;
  color: #f1f2f3;
}

.input.focus {
  margin-top: 13px;
}

.caret {
  width: 1px;
  height: 19px;
  background: #fff;
}

.rename {
  width: 24px;
  height: 24px;
  margin-left: 8px;
}

.rule {
  border: 0;
  margin: 0;
  width: 328px;
  margin-left: -5px;
}

.rule.thin {
  height: 1px;
  background: #45494f;
  margin-top: 21px;
}

.rule.thick {
  height: 2px;
  background: #4d5157;
  margin-top: 35px;
}

.sub {
  font-size: 18px;
  font-weight: 700;
  line-height: 22px;
}

.props-h { margin-top: 20px; }
.size-h { margin-top: 21px; }

.check,
.radio {
  display: flex;
  align-items: center;
  gap: 9px;
  height: 20px;
}

.c1 { margin-top: 27px; }
.c2 { margin-top: 25px; }
.inc { margin-top: 20px; }

.cb,
.rd {
  width: 20px;
  height: 20px;
  box-sizing: border-box;
  border: 1px solid #b5b9bd;
  border-radius: 2px;
  flex-shrink: 0;
}

.rd {
  border-radius: 50%;
}

.radios {
  display: flex;
  margin-top: 20px;
}

.radio:nth-child(1) { width: 81px; }
.radio:nth-child(2) { width: 86px; }

.size-grid {
  margin-top: 17px;
  display: grid;
  grid-template-columns: 170px 158px;
}

.input.small {
  width: 158px;
  height: 40px;
  margin-top: 9px;
  padding-left: 4px;
}

.props-track {
  width: 8px;
  flex-shrink: 0;
}

.props-thumb {
  display: block;
  height: 613px;
  margin-top: 2px;
  border-radius: 4px;
  background: #a8b0b8;
}

/* rail */
.rail {
  width: 51px;
  flex-shrink: 0;
  background: #999;
  box-shadow: 2px 0 4px rgba(0, 0, 0, .5);
  position: relative;
  z-index: 2;
}

.rail-item {
  height: 50px;
  box-sizing: border-box;
  border-bottom: 1px solid #b5b5b5;
  display: flex;
  align-items: center;
  justify-content: center;
  padding-right: 3px;
}

.rail-item.current {
  border-left: 5px solid #cf3339;
  padding-right: 8px;
}

.rail-item:last-child {
  border-bottom: 0;
}

.bell {
  margin-top: 5px;
}

/* index fields */
.index-panel {
  flex: 1;
  min-width: 0;
  display: flex;
  flex-direction: column;
  background: #fff;
}

.index-content {
  flex: 1;
  padding: 0 10px 0 9px;
}

.index-title {
  margin: 0;
  height: 59px;
  box-sizing: border-box;
  padding-top: 8px;
  text-align: center;
  border-bottom: 2px solid #3a3d42;
  font: 500 24.400px/34px "Open Sans", sans-serif;
  color: #33373f;
}

.index-footer {
  height: 70px;
  background: #f2f2f2;
  display: flex;
  justify-content: flex-end;
  padding: 12px 12px 0 0;
  box-sizing: border-box;
}

.save {
  width: 71px;
  height: 44px;
  background: #d4343c;
  color: #fff;
  font: 17.500px "Roboto", sans-serif;
  border-radius: 2px;
}

/* page scrollbar */
.page-scroll {
  width: 17px;
  background: #2c2c2c;
  display: flex;
  flex-direction: column;
  align-items: center;
  padding-top: 5px;
  box-sizing: border-box;
}

.up {
  width: 12px;
  height: 8px;
}

.page-thumb {
  width: 10px;
  flex: 1;
  margin-top: 3px;
  background: #9c9c9c;
  border-radius: 5px 5px 0 0;
}
</style>
